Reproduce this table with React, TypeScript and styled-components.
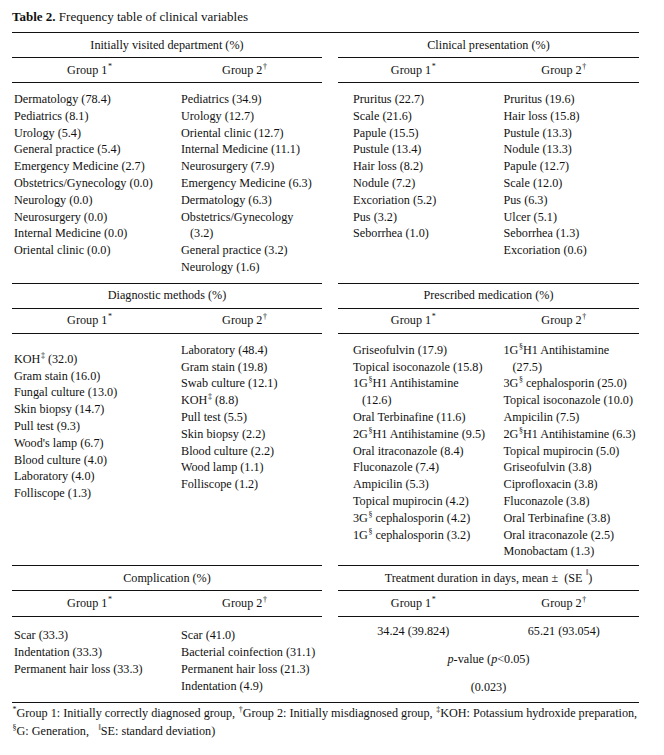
import React from "react";
import styled, { createGlobalStyle } from "styled-components";

const GlobalStyle = createGlobalStyle`
  html, body { margin: 0; padding: 0; background: #ffffff; }
  body {
    font-family: "Liberation Serif", "Times New Roman", serif;
    color: #111111;
    -webkit-font-smoothing: antialiased;
  }
`;

const Page = styled.div`
  width: 627px;
  padding: 9px 0 0 12px;
`;

const Title = styled.div`
  font-size: 13px;
  line-height: 16px;
  height: 16px;
  margin-bottom: 7px;
  white-space: nowrap;
  b { font-weight: 700; }
`;

const Table = styled.div`
  border-top: 1px solid #111;
  border-bottom: 1px solid #111;
  font-size: 12.2px;
`;

const Section = styled.div`
  display: grid;
  grid-template-columns: 310px 1fr;
  column-gap: 16px;
`;

const Panel = styled.div<{ $top?: boolean }>`
  display: flex;
  flex-direction: column;
  border-top: ${(p) => (p.$top ? "1px solid #111" : "none")};
`;

const PanelHeader = styled.div<{ $h?: number }>`
  height: ${(p) => p.$h ?? 24}px;
  border-bottom: 1px solid #111;
  display: flex;
  align-items: center;
  justify-content: center;
  white-space: nowrap;
`;

const GroupRow = styled.div<{ $h?: number }>`
  height: ${(p) => p.$h ?? 24}px;
  border-bottom: 1px solid #111;
  display: grid;
  grid-template-columns: 1fr 1fr;
  align-items: center;
`;

const GroupLabel = styled.div`
  text-align: center;
  white-space: nowrap;
`;

const DataGrid = styled.div<{ $pt: number; $pb: number }>`
  flex: 1;
  display: grid;
  grid-template-columns: 1fr 1fr;
  padding: ${(p) => p.$pt}px 0 ${(p) => p.$pb}px;
`;

const Column = styled.div<{ $pl: number; $offset?: number }>`
  padding-left: ${(p) => p.$pl}px;
  padding-top: ${(p) => p.$offset ?? 0}px;
`;

const Line = styled.div<{ $cont?: boolean }>`
  line-height: 16.8px;
  height: 16.8px;
  white-space: nowrap;
  padding-left: ${(p) => (p.$cont ? 9 : 0)}px;
`;

const Sup = styled.sup`
  font-size: 8px;
  line-height: 0;
  vertical-align: 0;
  position: relative;
  top: -5px;
  margin-left: 0.5px;
`;

const StatGrid = styled.div`
  display: grid;
  grid-template-columns: 1fr 1fr;
  grid-auto-rows: 28px;
  align-items: center;
  padding-bottom: 1px;
`;

const StatCell = styled.div<{ $span?: boolean }>`
  text-align: center;
  white-space: nowrap;
  grid-column: ${(p) => (p.$span ? "1 / span 2" : "auto")};
`;

const Footnote = styled.div`
  padding-top: 2px;
  font-size: 12.2px;
  line-height: 17.5px;
`;

const FootLine = styled.div`
  white-space: nowrap;
`;

function rich(s: string) {
  const parts = s.split("^");
  return parts.map((part, i) =>
    i % 2 === 1 ? <Sup key={i}>{part}</Sup> : <React.Fragment key={i}>{part}</React.Fragment>
  );
}

function Lines({ items }: { items: string[] }) {
  return (
    <>
      {items.map((it, i) => {
        const cont = it.startsWith(">");
        const text = cont ? it.slice(1) : it;
        return (
          <Line key={i} $cont={cont}>
            {rich(text)}
          </Line>
        );
      })}
    </>
  );
}

type ListPanelProps = {
  title: React.ReactNode;
  top?: boolean;
  g1: string[];
  g2: string[];
  pl: [number, number];
  pt: number;
  pb: number;
  offset1?: number;
  groupH?: number;
};

function ListPanel({ title, top, g1, g2, pl, pt, pb, offset1, groupH }: ListPanelProps) {
  return (
    <Panel $top={top}>
      <PanelHeader>{title}</PanelHeader>
      <GroupRow $h={groupH}>
        <GroupLabel>
          Group 1<Sup>*</Sup>
        </GroupLabel>
        <GroupLabel>
          Group 2<Sup>†</Sup>
        </GroupLabel>
      </GroupRow>
      <DataGrid $pt={pt} $pb={pb}>
        <Column $pl={pl[0]} $offset={offset1}>
          <Lines items={g1} />
        </Column>
        <Column $pl={pl[1]}>
          <Lines items={g2} />
        </Column>
      </DataGrid>
    </Panel>
  );
}

const dept1 = [
  "Dermatology (78.4)",
  "Pediatrics (8.1)",
  "Urology (5.4)",
  "General practice (5.4)",
  "Emergency Medicine (2.7)",
  "Obstetrics/Gynecology (0.0)",
  "Neurology (0.0)",
  "Neurosurgery (0.0)",
  "Internal Medicine (0.0)",
  "Oriental clinic (0.0)",
];
const dept2 = [
  "Pediatrics (34.9)",
  "Urology (12.7)",
  "Oriental clinic (12.7)",
  "Internal Medicine (11.1)",
  "Neurosurgery (7.9)",
  "Emergency Medicine (6.3)",
  "Dermatology (6.3)",
  "Obstetrics/Gynecology",
  ">(3.2)",
  "General practice (3.2)",
  "Neurology (1.6)",
];
const pres1 = [
  "Pruritus (22.7)",
  "Scale (21.6)",
  "Papule (15.5)",
  "Pustule (13.4)",
  "Hair loss (8.2)",
  "Nodule (7.2)",
  "Excoriation (5.2)",
  "Pus (3.2)",
  "Seborrhea (1.0)",
];
const pres2 = [
  "Pruritus (19.6)",
  "Hair loss (15.8)",
  "Pustule (13.3)",
  "Nodule (13.3)",
  "Papule (12.7)",
  "Scale (12.0)",
  "Pus (6.3)",
  "Ulcer (5.1)",
  "Seborrhea (1.3)",
  "Excoriation (0.6)",
];
const diag1 = [
  "KOH^‡^ (32.0)",
  "Gram stain (16.0)",
  "Fungal culture (13.0)",
  "Skin biopsy (14.7)",
  "Pull test (9.3)",
  "Wood's lamp (6.7)",
  "Blood culture (4.0)",
  "Laboratory (4.0)",
  "Folliscope (1.3)",
];
const diag2 = [
  "Laboratory (48.4)",
  "Gram stain (19.8)",
  "Swab culture (12.1)",
  "KOH^‡^ (8.8)",
  "Pull test (5.5)",
  "Skin biopsy (2.2)",
  "Blood culture (2.2)",
  "Wood lamp (1.1)",
  "Folliscope (1.2)",
];
const med1 = [
  "Griseofulvin (17.9)",
  "Topical isoconazole (15.8)",
  "1G^§^H1 Antihistamine",
  ">(12.6)",
  "Oral Terbinafine (11.6)",
  "2G^§^H1 Antihistamine (9.5)",
  "Oral itraconazole (8.4)",
  "Fluconazole (7.4)",
  "Ampicilin (5.3)",
  "Topical mupirocin (4.2)",
  "3G^§^ cephalosporin (4.2)",
  "1G^§^ cephalosporin (3.2)",
];
const med2 = [
  "1G^§^H1 Antihistamine",
  ">(27.5)",
  "3G^§^ cephalosporin (25.0)",
  "Topical isoconazole (10.0)",
  "Ampicilin (7.5)",
  "2G^§^H1 Antihistamine (6.3)",
  "Topical mupirocin (5.0)",
  "Griseofulvin (3.8)",
  "Ciprofloxacin (3.8)",
  "Fluconazole (3.8)",
  "Oral Terbinafine (3.8)",
  "Oral itraconazole (2.5)",
  "Monobactam (1.3)",
];
const comp1 = ["Scar (33.3)", "Indentation (33.3)", "Permanent hair loss (33.3)"];
const comp2 = [
  "Scar (41.0)",
  "Bacterial coinfection (31.1)",
  "Permanent hair loss (21.3)",
  "Indentation (4.9)",
];

export default function App() {
  return (
    <>
      <GlobalStyle />
      <Page>
        <Title>
          <b>Table 2.</b> Frequency table of clinical variables
        </Title>
        <Table>
          <Section>
            <ListPanel
              title="Initially visited department (%)"
              g1={dept1}
              g2={dept2}
              pl={[2, 14]}
              pt={8}
              pb={7}
            />
            <ListPanel
              title="Clinical presentation (%)"
              g1={pres1}
              g2={pres2}
              pl={[15, 15]}
              pt={8}
              pb={7}
            />
          </Section>
          <Section>
            <ListPanel
              top
              title="Diagnostic methods (%)"
              g1={diag1}
              g2={diag2}
              pl={[2, 14]}
              pt={8}
              pb={5}
              offset1={9}
            />
            <ListPanel
              top
              title="Prescribed medication (%)"
              g1={med1}
              g2={med2}
              pl={[15, 15]}
              pt={8}
              pb={5}
            />
          </Section>
          <Section>
            <ListPanel
              top
              title="Complication (%)"
              g1={comp1}
              g2={comp2}
              pl={[2, 14]}
              pt={10}
              pb={8}
              groupH={25}
            />
            <Panel $top>
              <PanelHeader>
                Treatment duration in days, mean ±&nbsp;&nbsp;(SE&nbsp;<Sup>‖</Sup>)
              </PanelHeader>
              <GroupRow $h={25}>
                <GroupLabel>
                  Group 1<Sup>*</Sup>
                </GroupLabel>
                <GroupLabel>
                  Group 2<Sup>†</Sup>
                </GroupLabel>
              </GroupRow>
              <StatGrid>
                <StatCell>34.24 (39.824)</StatCell>
                <StatCell>65.21 (93.054)</StatCell>
                <StatCell $span>
                  <i>p</i>-value (<i>p</i>&lt;0.05)
                </StatCell>
                <StatCell $span>(0.023)</StatCell>
              </StatGrid>
            </Panel>
          </Section>
        </Table>
        <Footnote>
          <FootLine>
            <Sup>*</Sup>Group 1: Initially correctly diagnosed group, <Sup>†</Sup>Group 2: Initially
            misdiagnosed group, <Sup>‡</Sup>KOH: Potassium hydroxide preparation,
          </FootLine>
          <FootLine>
            <Sup>§</Sup>G: Generation,&nbsp;&nbsp; <Sup>‖</Sup>SE: standard deviation)
          </FootLine>
        </Footnote>
      </Page>
    </>
  );
}
